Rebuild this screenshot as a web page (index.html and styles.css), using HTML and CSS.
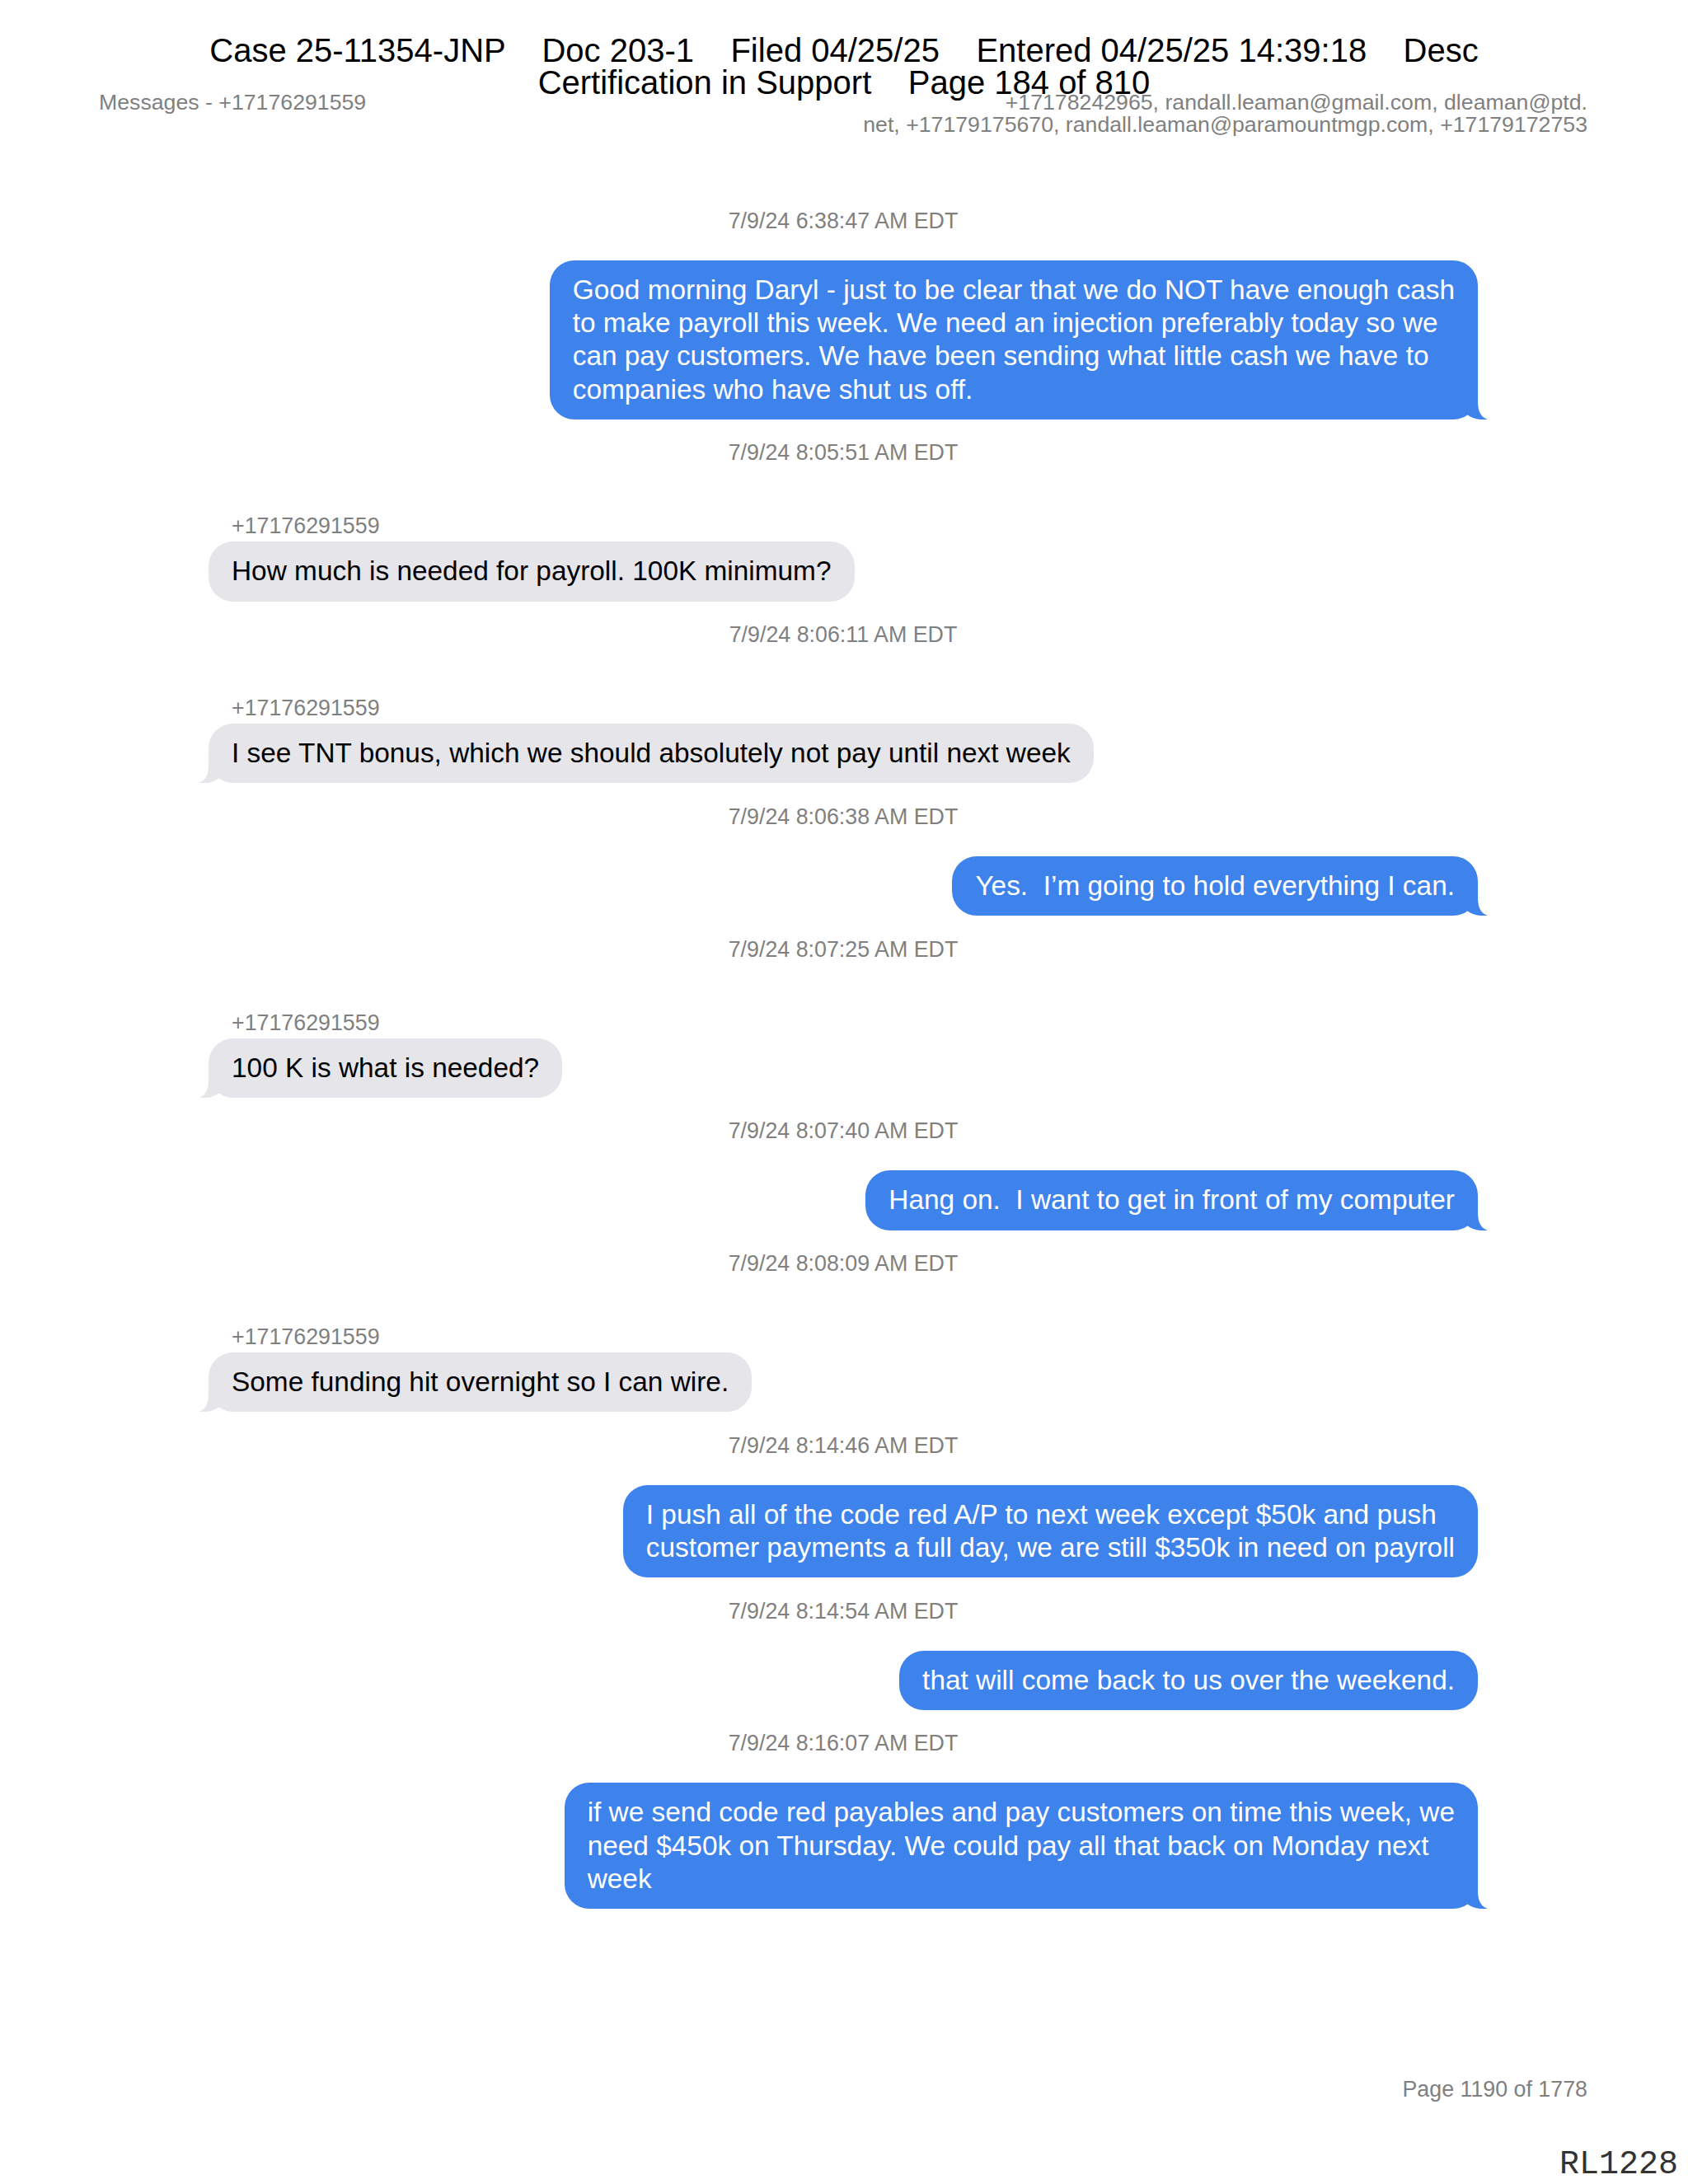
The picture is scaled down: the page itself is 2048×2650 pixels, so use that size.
FILE: index.html
```html
<!DOCTYPE html>
<html lang="en">
<head>
<meta charset="utf-8">
<title>Messages - +17176291559</title>
<link rel="stylesheet" href="styles.css">
</head>
<body>
<div class="page">
  <div class="stamp">
    <div class="stamp-line">Case 25-11354-JNP    Doc 203-1    Filed 04/25/25    Entered 04/25/25 14:39:18    Desc</div>
    <div class="stamp-line">Certification in Support    Page 184 of 810</div>
  </div>

  <header class="meta">
    <div class="meta-left">Messages - +17176291559</div>
    <div class="meta-right">+17178242965, randall.leaman@gmail.com, dleaman@ptd.<br>net, +17179175670, randall.leaman@paramountmgp.com, +17179172753</div>
  </header>

  <main class="chat">
    <div class="ts">7/9/24 6:38:47 AM EDT</div>
    <div class="msg out">
      <div class="bubble">Good morning Daryl - just to be clear that we do NOT have enough cash<br>to make payroll this week. We need an injection preferably today so we<br>can pay customers. We have been sending what little cash we have to<br>companies who have shut us off.<svg class="tail" viewBox="0 0 37 30" width="37" height="30"><path d="M12 0H25V8C25 21 29 27 37 30C28 31 18 29 12 24Z"/></svg></div>
    </div>

    <div class="ts">7/9/24 8:05:51 AM EDT</div>
    <div class="msg in">
      <div class="sender">+17176291559</div>
      <div class="bubble">How much is needed for payroll. 100K minimum?</div>
    </div>

    <div class="ts">7/9/24 8:06:11 AM EDT</div>
    <div class="msg in">
      <div class="sender">+17176291559</div>
      <div class="bubble">I see TNT bonus, which we should absolutely not pay until next week<svg class="tail" viewBox="0 0 37 30" width="37" height="30"><path d="M12 0H25V8C25 21 29 27 37 30C28 31 18 29 12 24Z"/></svg></div>
    </div>

    <div class="ts">7/9/24 8:06:38 AM EDT</div>
    <div class="msg out">
      <div class="bubble">Yes.&nbsp; I’m going to hold everything I can.<svg class="tail" viewBox="0 0 37 30" width="37" height="30"><path d="M12 0H25V8C25 21 29 27 37 30C28 31 18 29 12 24Z"/></svg></div>
    </div>

    <div class="ts">7/9/24 8:07:25 AM EDT</div>
    <div class="msg in">
      <div class="sender">+17176291559</div>
      <div class="bubble">100 K is what is needed?<svg class="tail" viewBox="0 0 37 30" width="37" height="30"><path d="M12 0H25V8C25 21 29 27 37 30C28 31 18 29 12 24Z"/></svg></div>
    </div>

    <div class="ts">7/9/24 8:07:40 AM EDT</div>
    <div class="msg out">
      <div class="bubble">Hang on.&nbsp; I want to get in front of my computer<svg class="tail" viewBox="0 0 37 30" width="37" height="30"><path d="M12 0H25V8C25 21 29 27 37 30C28 31 18 29 12 24Z"/></svg></div>
    </div>

    <div class="ts">7/9/24 8:08:09 AM EDT</div>
    <div class="msg in">
      <div class="sender">+17176291559</div>
      <div class="bubble">Some funding hit overnight so I can wire.<svg class="tail" viewBox="0 0 37 30" width="37" height="30"><path d="M12 0H25V8C25 21 29 27 37 30C28 31 18 29 12 24Z"/></svg></div>
    </div>

    <div class="ts">7/9/24 8:14:46 AM EDT</div>
    <div class="msg out">
      <div class="bubble">I push all of the code red A/P to next week except $50k and push<br>customer payments a full day, we are still $350k in need on payroll</div>
    </div>

    <div class="ts">7/9/24 8:14:54 AM EDT</div>
    <div class="msg out">
      <div class="bubble">that will come back to us over the weekend.</div>
    </div>

    <div class="ts">7/9/24 8:16:07 AM EDT</div>
    <div class="msg out">
      <div class="bubble">if we send code red payables and pay customers on time this week, we<br>need $450k on Thursday. We could pay all that back on Monday next<br>week<svg class="tail" viewBox="0 0 37 30" width="37" height="30"><path d="M12 0H25V8C25 21 29 27 37 30C28 31 18 29 12 24Z"/></svg></div>
    </div>
  </main>

  <footer class="footer">
    <div class="page-num">Page 1190 of 1778</div>
    <div class="bates">RL1228</div>
  </footer>
</div>
</body>
</html>
```

FILE: styles.css
```css
html, body {
  margin: 0;
  padding: 0;
  background: #ffffff;
}

body {
  font-family: "Liberation Sans", Arial, sans-serif;
  color: #000000;
}

.page {
  position: relative;
  width: 2048px;
  height: 2650px;
  box-sizing: border-box;
  padding: 111px 122px 0 120px;
  display: flex;
  flex-direction: column;
  overflow: hidden;
}

/* Court filing stamp overlaid on the top of the page */
.stamp {
  position: absolute;
  top: 42px;
  left: 0;
  right: 0;
  text-align: center;
  font-size: 40px;
  line-height: 38.5px;
  color: #000;
  z-index: 2;
}

.stamp-line {
  white-space: pre;
}

.meta {
  display: flex;
  justify-content: space-between;
  align-items: flex-start;
  font-size: 26.7px;
  line-height: 27px;
  color: #808080;
}

.meta-right {
  text-align: right;
}

.chat {
  display: flex;
  flex-direction: column;
  padding: 0 133px;
  margin-top: 62.5px;
}

.ts {
  text-align: center;
  font-size: 26.8px;
  line-height: 32px;
  color: #808080;
  margin-top: 24.4px;
}

.msg {
  display: flex;
  flex-direction: column;
}

.msg.out {
  align-items: flex-end;
  margin-top: 32px;
}

.msg.in {
  align-items: flex-start;
  margin-top: 57px;
}

.sender {
  font-size: 26.8px;
  line-height: 32px;
  color: #808080;
  padding-left: 28px;
  margin-bottom: 3px;
}

.bubble {
  position: relative;
  font-size: 33.4px;
  line-height: 40.3px;
  padding: 16px 28px;
  border-radius: 30px;
  white-space: nowrap;
}

.msg.out .bubble {
  background: #3e82ec;
  color: #ffffff;
}

.msg.in .bubble {
  background: #e5e5ea;
  color: #000000;
}

.tail {
  position: absolute;
  bottom: 0;
  display: block;
}

.msg.out .tail {
  right: -12px;
  fill: #3e82ec;
}

.msg.in .tail {
  left: -12px;
  fill: #e5e5ea;
  transform: scaleX(-1);
}

.footer {
  margin-top: auto;
  display: flex;
  flex-direction: column;
  align-items: flex-end;
}

.page-num {
  font-size: 26.8px;
  line-height: 32px;
  color: #808080;
  margin-bottom: 56px;
}

.bates {
  font-family: "Liberation Mono", "Courier New", monospace;
  font-size: 40px;
  line-height: 40px;
  color: #333333;
  margin-right: -110px;
  margin-bottom: 3px;
}
```
